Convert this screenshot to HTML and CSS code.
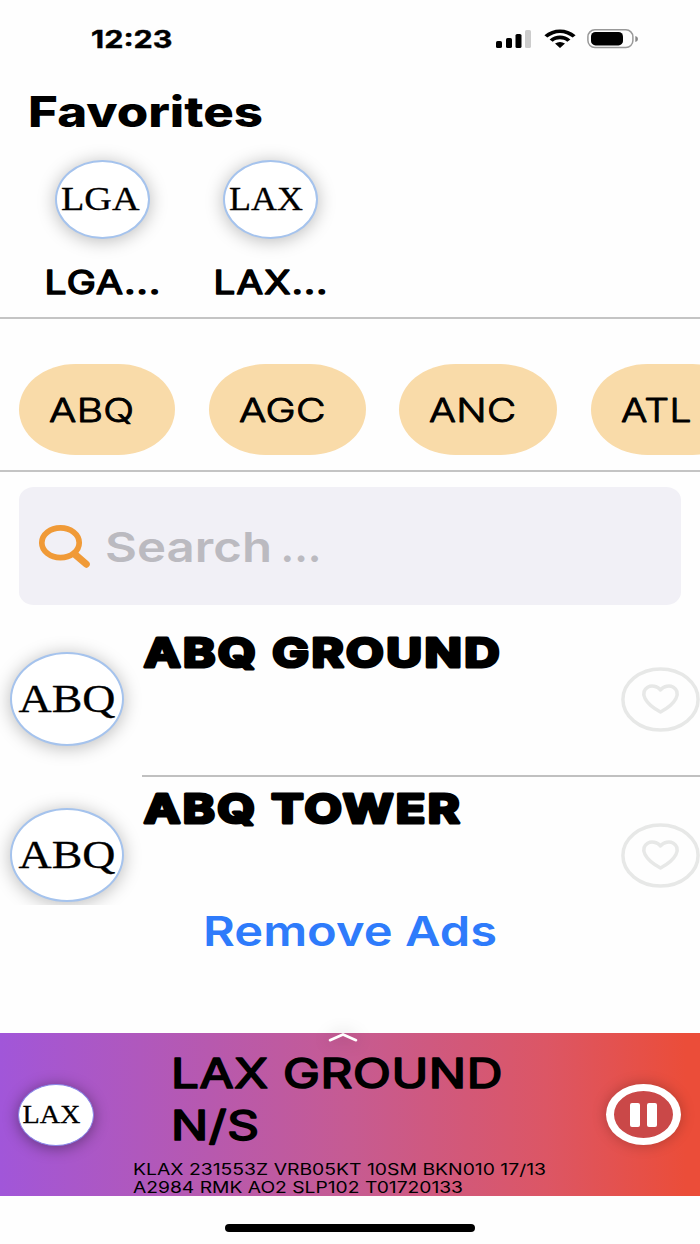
FILE: index.html
```html
<!DOCTYPE html>
<html lang="en">
<head>
<meta charset="utf-8">
<title>Favorites</title>
<link rel="stylesheet" href="styles.css">
</head>
<body>
<main class="screen">
  <header class="status">
    <svg class="clock" width="90" height="30"><text x="0" y="24" textLength="81.500" lengthAdjust="spacingAndGlyphs">12:23</text></svg>
    <div class="status-icons">
      <svg width="36" height="20" viewBox="0 0 36 20"><rect x="0" y="12" width="6" height="7" rx="1.6"/><rect x="10" y="9" width="6" height="10" rx="1.6"/><rect x="19.500" y="5" width="6" height="14" rx="1.600"/><rect class="dim" x="29" y="1" width="6" height="18" rx="1.600"/></svg>
      <svg width="32" height="20" viewBox="0 0 32 20"><path d="M.4 6.300C9-1.600 23-1.600 31.600 6.300L28.700 8.600C21 2.300 11 2.300 3.300 8.600ZM5.600 10.400C11.500 5.300 20.500 5.300 26.400 10.400L23.300 12.700C19 9.500 13 9.500 8.700 12.700ZM11 14.500Q16 11.500 21 14.500L16 19Z"/></svg>
      <svg width="52" height="20" viewBox="0 0 52 20"><rect class="battery" x=".9" y=".8" width="45" height="17.800" rx="7"/><rect x="4" y="3" width="32" height="13.400" rx="4.500"/><path class="tip" d="M48.300 7Q51 7.500 51 10T48.300 13Z"/></svg>
    </div>
  </header>

  <section class="favorites">
    <h1><svg width="250" height="50"><text x="-2" y="38" textLength="235" lengthAdjust="spacingAndGlyphs">Favorites</text></svg></h1>
    <div class="fav-list">
      <div class="fav">
        <div class="avatar"><svg width="94" height="78"><text x="4" y="48" textLength="78.500" lengthAdjust="spacingAndGlyphs">LGA</text></svg></div>
        <svg class="fav-name" width="120" height="36"><text x="-1.500" y="28" textLength="117" lengthAdjust="spacingAndGlyphs">LGA...</text></svg>
      </div>
      <div class="fav">
        <div class="avatar"><svg width="94" height="78"><text x="4" y="48" textLength="74" lengthAdjust="spacingAndGlyphs">LAX</text></svg></div>
        <svg class="fav-name" width="120" height="36"><text x="-.5" y="28" textLength="115" lengthAdjust="spacingAndGlyphs">LAX...</text></svg>
      </div>
    </div>
  </section>

  <nav class="chips">
    <div class="chip w1"><svg width="100" height="40"><text x="0" y="32" textLength="85.500" lengthAdjust="spacingAndGlyphs">ABQ</text></svg></div>
    <div class="chip w2"><svg width="100" height="40"><text x="0" y="32" textLength="87" lengthAdjust="spacingAndGlyphs">AGC</text></svg></div>
    <div class="chip w3"><svg width="100" height="40"><text x="0" y="32" textLength="87.500" lengthAdjust="spacingAndGlyphs">ANC</text></svg></div>
    <div class="chip w3"><svg width="100" height="40"><text x="0" y="32" textLength="71" lengthAdjust="spacingAndGlyphs">ATL</text></svg></div>
  </nav>

  <div class="search">
    <svg class="lens" width="52" height="44" viewBox="0 0 52 44"><ellipse cx="21.500" cy="18.700" rx="18.700" ry="14.900"/><path d="M35.500 30L47.300 40.200"/></svg>
    <svg class="placeholder" width="230" height="50"><text x="-2" y="39.500" textLength="167" lengthAdjust="spacingAndGlyphs">Search</text><text x="173.500" y="39.500" textLength="41" lengthAdjust="spacingAndGlyphs">...</text></svg>
  </div>

  <section class="stations">
    <article class="station">
      <div class="avatar large"><svg width="113" height="93"><text x="6.500" y="57.500" textLength="97" lengthAdjust="spacingAndGlyphs">ABQ</text></svg></div>
      <div class="station-body">
        <svg class="station-name" width="370" height="46"><text x="2" y="39" textLength="358" lengthAdjust="spacingAndGlyphs">ABQ GROUND</text></svg>
        <svg class="heart" width="80" height="65" viewBox="0 0 80 65"><ellipse cx="39.500" cy="32.500" rx="37.600" ry="30.600"/><path d="M39.500 23C36 18.500 30 18.500 27 20C18 25.500 24 37 39.500 45C55 37 61 25.500 52 20C49 18.500 43 18.500 39.500 23Z"/></svg>
      </div>
    </article>
    <article class="station">
      <div class="avatar large"><svg width="113" height="93"><text x="6.500" y="57.500" textLength="97" lengthAdjust="spacingAndGlyphs">ABQ</text></svg></div>
      <div class="station-body">
        <svg class="station-name" width="370" height="46"><text x="2" y="39" textLength="318" lengthAdjust="spacingAndGlyphs">ABQ TOWER</text></svg>
        <svg class="heart" width="80" height="65" viewBox="0 0 80 65"><ellipse cx="39.500" cy="32.500" rx="37.600" ry="30.600"/><path d="M39.500 23C36 18.500 30 18.500 27 20C18 25.500 24 37 39.500 45C55 37 61 25.500 52 20C49 18.500 43 18.500 39.500 23Z"/></svg>
      </div>
    </article>
  </section>

  <div class="remove"><svg width="300" height="50"><text x="3" y="41" textLength="294" lengthAdjust="spacingAndGlyphs">Remove Ads</text></svg></div>

  <footer class="player">
    <svg class="chevron" width="30" height="10" viewBox="0 0 30 10"><path d="M2 7.200L15 1.500L28 7.200"/></svg>
    <div class="avatar small"><svg width="75" height="61"><text x="3.500" y="38" textLength="58" lengthAdjust="spacingAndGlyphs">LAX</text></svg></div>
    <div class="now">
      <svg class="now-title" width="350" height="104"><text x="-1" y="41" textLength="332" lengthAdjust="spacingAndGlyphs">LAX GROUND</text><text x="-1" y="93" textLength="88.500" lengthAdjust="spacingAndGlyphs">N/S</text></svg>
      <svg class="metar" width="430" height="40"><text x="-1" y="20.500" textLength="413" lengthAdjust="spacingAndGlyphs">KLAX 231553Z VRB05KT 10SM BKN010 17/13</text><text x="-1" y="39" textLength="330" lengthAdjust="spacingAndGlyphs">A2984 RMK AO2 SLP102 T01720133</text></svg>
    </div>
    <div class="pause"><i></i><i></i></div>
  </footer>
  <div class="home"></div>
</main>
</body>
</html>
```

FILE: styles.css
```css
* { box-sizing: border-box; }
body { margin: 0; background: #fefefe; font-family: Inter, "Liberation Sans", sans-serif; }
svg { display: block; flex: none; overflow: visible; }
text { white-space: pre; }
.screen { width: 700px; height: 1244px; overflow: hidden; display: flex; flex-direction: column; }

.status { height: 87.5px; padding: 23.5px 61px 0 91px; display: flex; justify-content: space-between; }
.clock { font-size: 24px; font-weight: 700; }
.clock text { stroke: #000; stroke-width: .4; }
.status-icons { display: flex; gap: 11.5px; padding-top: 5px; }
.dim { fill: #ccc; }
.battery { fill: none; stroke: #999; stroke-width: 1.5; }
.tip { fill: #888; }

.favorites { height: 231.5px; border-bottom: 2px solid #c4c4c4; }
h1 { margin: 0; padding: 1px 0 0 30px; height: 72px; font-size: 42px; font-weight: 800; }
.fav-list { display: flex; padding-left: 46px; gap: 48px; }
.fav { width: 120px; }
.avatar { width: 95px; height: 79px; margin-left: 9px; border: 2px solid #a5c3ed; border-radius: 50%; background: #fff; box-shadow: 0 2px 18px rgba(0,0,0,.27); font-family: "Liberation Serif", serif; font-size: 33px; flex: none; }
.avatar text { stroke: #000; stroke-width: .3; }
.fav-name { margin-top: 27px; font-size: 32.5px; font-weight: 400; letter-spacing: 1px; }
.fav-name text { stroke: #000; stroke-width: 1.5; stroke-linejoin: round; }

.chips { height: 153px; padding: 44.5px 0 0 19px; display: flex; gap: 33.5px; border-bottom: 2px solid #c4c4c4; overflow: hidden; }
.chip { height: 91.5px; flex: none; padding: 26px 0 0 30px; background: #f9dba9; border-radius: 57px / 46px; font-size: 32.5px; font-weight: 300; letter-spacing: .3px; }
.chip text { stroke: #000; stroke-width: .9; stroke-linejoin: round; }
.w1 { width: 156px; }
.w2 { width: 157px; }
.w3 { width: 158px; }

.search { height: 118px; margin: 15px 19px 0; padding: 0 20px; border-radius: 15px / 13px; background: #f1f0f6; display: flex; gap: 16px; }
.lens { margin-top: 37px; fill: none; stroke: #f09a37; stroke-width: 5.7; stroke-linecap: round; }
.lens path { stroke-width: 7; }
.placeholder { margin-top: 35px; font-size: 41.5px; font-weight: 600; fill: #bbbac0; }

.stations { height: 300px; overflow: hidden; }
.station { height: 156px; display: flex; }
.large { width: 114px; height: 94px; margin: 47px 0 0 10px; font-size: 39px; }
.station-body { width: 558px; height: 172px; margin-left: 18px; border-bottom: 2px solid #c0c0c0; display: flex; justify-content: space-between; flex: none; }
.station-name { margin-top: 23px; font-size: 39.5px; font-weight: 700; letter-spacing: 2px; }
.station-name text { stroke: #000; stroke-width: 3.2; stroke-linejoin: round; }
.heart { margin: 62px -1px 0 0; fill: none; stroke: #e7e8e7; stroke-width: 3.5; stroke-linejoin: round; }

.remove { height: 128px; padding-left: 200px; font-size: 41px; font-weight: 600; fill: #2e7bfb; }

.player { position: relative; height: 163px; display: flex; background: linear-gradient(90deg, #a156d9, #c65b92 50%, #dc5665 78%, #eb4d39 98%); }
.chevron { position: absolute; left: 327.5px; top: 0; fill: none; stroke: #fff; stroke-width: 2.6; stroke-linecap: round; filter: drop-shadow(0 0 8px rgba(0,0,0,.3)); }
.small { width: 76px; height: 62px; margin: 50.5px 0 0 18px; border-width: 1px; border-color: #8a86e8; font-size: 26px; box-shadow: 0 2px 15px rgba(0,0,0,.4); }
.now { margin-left: 40px; width: 472px; }
.now-title { margin: 14px 0 0 38px; font-size: 40.5px; font-weight: 400; letter-spacing: .5px; }
.now-title text { stroke: #000; stroke-width: 1.7; stroke-linejoin: round; }
.metar { margin-top: 3px; font-size: 15.3px; font-weight: 400; }
.pause { width: 75px; height: 61px; margin-top: 51px; border: solid #fff; border-width: 7px 8.5px; border-radius: 50%; background: #ca4848; box-shadow: 0 0 14px rgba(0,0,0,.25); display: flex; justify-content: center; align-items: center; gap: 7px; }
.pause i { width: 10px; height: 24px; border-radius: 2px; background: #fff; }
.home { width: 250px; height: 8px; margin: 27.5px auto 0; border-radius: 4px; background: #000; }
```
